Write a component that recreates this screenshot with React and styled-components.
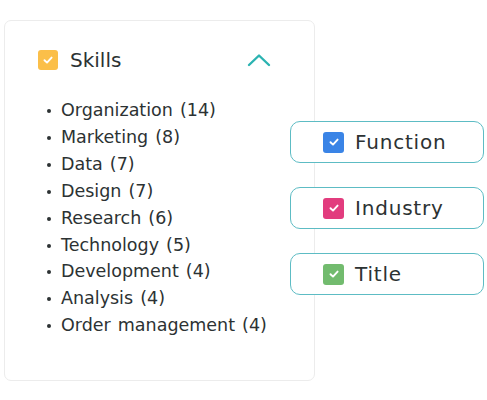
import React from "react";
import styled, { createGlobalStyle } from "styled-components";

const GlobalStyle = createGlobalStyle`
  body {
    margin: 0;
    background: #ffffff;
    font-family: "DejaVu Sans", "Noto Sans", sans-serif;
    color: #2c3233;
  }
`;

const Page = styled.div`
  display: flex;
  align-items: flex-start;
  padding: 20px 0 0 4px;
  width: 487px;
  height: 400px;
  box-sizing: border-box;
`;

const Card = styled.div`
  width: 311px;
  height: 361px;
  box-sizing: border-box;
  border: 1px solid #ececec;
  border-radius: 7px;
  background: #fff;
  padding: 28px 0 0 33px;
`;

const Header = styled.div`
  display: flex;
  align-items: center;
  height: 22px;
  width: 233px;
`;

const Box = styled.span`
  display: inline-flex;
  align-items: center;
  justify-content: center;
  width: ${(p) => p.size}px;
  height: ${(p) => p.size}px;
  border-radius: 3px;
  background: ${(p) => p.color};
  flex-shrink: 0;
`;

const HeaderTitle = styled.span`
  margin-left: 12px;
  font-size: 20px;
  flex: 1;
`;

const List = styled.ul`
  margin: 26px 0 0 0;
  padding: 0 0 0 23px;
  list-style: none;
`;

const Item = styled.li`
  position: relative;
  font-size: 17.5px;
  line-height: 26.9px;
  word-spacing: 1.5px;
  white-space: nowrap;
  &::before {
    content: "";
    position: absolute;
    left: -14px;
    top: 12px;
    width: 4px;
    height: 4px;
    border-radius: 50%;
    background: #2c3233;
  }
`;

const Side = styled.div`
  display: flex;
  flex-direction: column;
  gap: 24px;
  margin: 101px 0 0 -25px;
`;

const Option = styled.div`
  display: flex;
  align-items: center;
  width: 194px;
  height: 42px;
  box-sizing: border-box;
  border: 1.5px solid #5dbcc4;
  border-radius: 10px;
  background: #fff;
  padding-left: 32px;
`;

const OptionLabel = styled.span`
  margin-left: 11px;
  font-size: 20px;
  letter-spacing: 0.8px;
`;

const Check = () => (
  <svg width="12" height="12" viewBox="0 0 12 12">
    <path d="M2.5 6.2 L5 8.6 L9.6 3.6" fill="none" stroke="#fff" strokeWidth="1.9" strokeLinecap="round" strokeLinejoin="round" />
  </svg>
);

const skills = [
  "Organization (14)",
  "Marketing (8)",
  "Data (7)",
  "Design (7)",
  "Research (6)",
  "Technology (5)",
  "Development (4)",
  "Analysis (4)",
  "Order management (4)",
];

const options = [
  { label: "Function", color: "#3a84e6" },
  { label: "Industry", color: "#e23c7e" },
  { label: "Title", color: "#72bb6e" },
];

export default function App() {
  return (
    <>
      <GlobalStyle />
      <Page>
        <Card>
          <Header>
            <Box size={20} color="#fbbf49">
              <Check />
            </Box>
            <HeaderTitle>Skills</HeaderTitle>
            <svg width="24" height="14" viewBox="0 0 24 14">
              <path d="M2 12 L12 2.5 L22 12" fill="none" stroke="#2bb3b1" strokeWidth="2.4" strokeLinecap="round" strokeLinejoin="round" />
            </svg>
          </Header>
          <List>
            {skills.map((s) => (
              <Item key={s}>{s}</Item>
            ))}
          </List>
        </Card>
        <Side>
          {options.map((o) => (
            <Option key={o.label}>
              <Box size={21} color={o.color}>
                <Check />
              </Box>
              <OptionLabel>{o.label}</OptionLabel>
            </Option>
          ))}
        </Side>
      </Page>
    </>
  );
}
